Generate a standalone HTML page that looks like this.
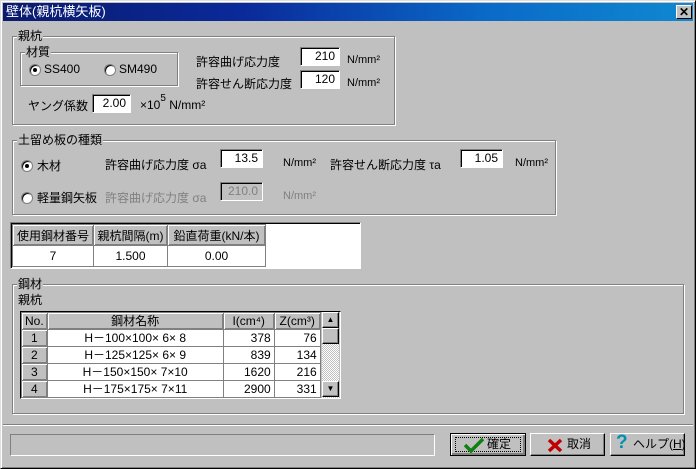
<!DOCTYPE html>
<html><head><meta charset="utf-8"><style>
*{box-sizing:border-box;margin:0;padding:0}
body{width:696px;height:469px;background:#c0c0c0;font-family:"Liberation Sans","Noto Sans CJK JP",sans-serif;font-size:12px;color:#000;position:relative;overflow:hidden}
.a{position:absolute;white-space:nowrap}
.win{left:0;top:0;width:696px;height:469px;border:1px solid;border-color:#dfdfdf #000 #000 #dfdfdf;box-shadow:inset 1px 1px #fff,inset -1px -1px #808080}
.title{left:3px;top:3px;width:690px;height:18px;background:linear-gradient(90deg,#0a1a6e,#0a2a9a 35%,#0a6ac8 70%,#1088d0);color:#fff;font-size:13px;line-height:18px;padding-left:3px}
.close{left:676px;top:5px;width:16px;height:14px;background:#c0c0c0;border:1px solid;border-color:#fff #000 #000 #fff;font-size:12px;font-weight:bold;text-align:center;line-height:12px}
.grp{border:1px solid #808080;box-shadow:1px 1px #fff,inset 1px 1px #fff}
.lbl{background:#c0c0c0;padding:0 1px}
.inp{background:#fff;border:1px solid;border-color:#808080 #fff #fff #808080;box-shadow:inset 1px 1px #000;text-align:right;padding-right:4px;line-height:16px;height:19px}
.dis{color:#808080}
.radio{width:12px;height:12px;border-radius:50%;background:#fff;border:1px solid #808080;box-shadow:inset 1px 1px #000}
.radio.on::after{content:"";position:absolute;left:3px;top:3px;width:4px;height:4px;border-radius:50%;background:#000}
table{border-collapse:collapse}
.t1 td{border:1px solid #808080;height:21px;text-align:center;font-size:12px}
.hd{background:#c0c0c0;box-shadow:inset 1px 1px #fff,inset -1px -1px #808080}
.t2 td{border:1px solid #808080;height:17px;line-height:14px;font-size:12px;padding:0 3px}
.btn{border:1px solid;border-color:#fff #000 #000 #fff;box-shadow:inset -1px -1px #808080;text-align:center;line-height:21px;height:23px}
</style></head><body>
<div class="a win"></div>
<div class="a title">壁体(親杭横矢板)</div>
<div class="a close">✕</div>

<div class="a grp" style="left:12px;top:36px;width:383px;height:89px"></div>
<div class="a lbl" style="left:17px;top:27px">親杭</div>
<div class="a grp" style="left:20px;top:52px;width:158px;height:34px"></div>
<div class="a lbl" style="left:25px;top:43px">材質</div>
<div class="a radio on" style="left:29px;top:64px"></div>
<div class="a" style="left:44px;top:62px">SS400</div>
<div class="a radio" style="left:104px;top:64px"></div>
<div class="a" style="left:119px;top:62px">SM490</div>
<div class="a" style="left:196px;top:53px">許容曲げ応力度</div>
<div class="a inp" style="left:300px;top:47px;width:40px">210</div>
<div class="a" style="left:347px;top:54px;font-size:11px">N/mm²</div>
<div class="a" style="left:196px;top:75px">許容せん断応力度</div>
<div class="a inp" style="left:300px;top:70px;width:40px">120</div>
<div class="a" style="left:347px;top:77px;font-size:11px">N/mm²</div>
<div class="a" style="left:28px;top:97px">ヤング係数</div>
<div class="a inp" style="left:92px;top:94px;width:39px">2.00</div>
<div class="a" style="left:140px;top:96px">×10<sup style="font-size:10px;position:relative;top:-3px">5</sup> N/mm²</div>

<div class="a grp" style="left:12px;top:140px;width:544px;height:75px"></div>
<div class="a lbl" style="left:17px;top:131px">土留め板の種類</div>
<div class="a radio on" style="left:21px;top:160px"></div>
<div class="a" style="left:37px;top:157px">木材</div>
<div class="a" style="left:105px;top:156px">許容曲げ応力度 σa</div>
<div class="a inp" style="left:220px;top:149px;width:43px">13.5</div>
<div class="a" style="left:283px;top:157px;font-size:11px">N/mm²</div>
<div class="a" style="left:330px;top:156px">許容せん断応力度 τa</div>
<div class="a inp" style="left:460px;top:149px;width:43px">1.05</div>
<div class="a" style="left:515px;top:157px;font-size:11px">N/mm²</div>
<div class="a radio" style="left:21px;top:192px"></div>
<div class="a" style="left:37px;top:189px">軽量鋼矢板</div>
<div class="a dis" style="left:105px;top:189px">許容曲げ応力度 σa</div>
<div class="a inp dis" style="left:220px;top:182px;width:43px;background:#c0c0c0">210.0</div>
<div class="a dis" style="left:283px;top:190px;font-size:11px">N/mm²</div>

<div class="a" style="left:10px;top:222px;width:351px;height:47px;background:#fff;border:1px solid;border-color:#808080 #fff #fff #808080;box-shadow:inset 1px 1px #000"></div>
<table class="a t1" style="left:12px;top:224px">
<tr><td class="hd" style="width:81px">使用鋼材番号</td><td class="hd" style="width:74px">親杭間隔(m)</td><td class="hd" style="width:98px">鉛直荷重(kN/本)</td></tr>
<tr style="background:#fff"><td>7</td><td>1.500</td><td>0.00</td></tr>
</table>

<div class="a grp" style="left:12px;top:284px;width:672px;height:130px"></div>
<div class="a lbl" style="left:17px;top:275px">鋼材</div>
<div class="a" style="left:18px;top:291px">親杭</div>
<div class="a" style="left:20px;top:311px;width:321px;height:88px;background:#c0c0c0;border:1px solid #000;border-right-color:#fff;border-bottom-color:#fff"></div>
<table class="a t2" style="left:21px;top:312px">
<tr><td class="hd" style="width:25px">No.</td><td class="hd" style="width:176px;text-align:center">鋼材名称</td><td class="hd" style="width:51px;text-align:center">I(cm⁴)</td><td class="hd" style="width:46px;text-align:center">Z(cm³)</td></tr>
<tr style="background:#fff"><td class="hd" style="text-align:center">1</td><td style="text-align:center">H－100×100× 6× 8</td><td style="text-align:right">378</td><td style="text-align:right">76</td></tr>
<tr style="background:#fff"><td class="hd" style="text-align:center">2</td><td style="text-align:center">H－125×125× 6× 9</td><td style="text-align:right">839</td><td style="text-align:right">134</td></tr>
<tr style="background:#fff"><td class="hd" style="text-align:center">3</td><td style="text-align:center">H－150×150× 7×10</td><td style="text-align:right">1620</td><td style="text-align:right">216</td></tr>
<tr style="background:#fff"><td class="hd" style="text-align:center">4</td><td style="text-align:center">H－175×175× 7×11</td><td style="text-align:right">2900</td><td style="text-align:right">331</td></tr>
</table>
<div class="a" style="left:322px;top:312px;width:17px;height:86px;background:repeating-conic-gradient(#fff 0 25%,#c0c0c0 0 50%) 0 0/2px 2px"></div>
<div class="a btn" style="left:322px;top:312px;width:17px;height:16px;line-height:14px;font-size:8px;background:#c0c0c0">▲</div>
<div class="a btn" style="left:322px;top:328px;width:17px;height:16px;background:#c0c0c0"></div>
<div class="a btn" style="left:322px;top:381px;width:17px;height:16px;line-height:14px;font-size:8px;background:#c0c0c0">▼</div>

<div class="a" style="left:3px;top:424px;width:690px;height:2px;border-top:1px solid #808080;border-bottom:1px solid #fff"></div>
<div class="a" style="left:10px;top:434px;width:425px;height:22px;border:1px solid;border-color:#808080 #fff #fff #808080"></div>
<div class="a btn" style="left:450px;top:433px;width:76px;border:1px solid #000;box-shadow:inset 1px 1px #fff,inset -2px -2px #808080">
<div class="a" style="left:4px;top:3px;width:66px;height:15px;border:1px dotted #000"></div>
<svg class="a" style="left:12px;top:3px" width="22" height="16"><path d="M2 8 L8 14 L20 2" stroke="#108010" stroke-width="3.5" fill="none"/></svg>
<span class="a" style="left:36px;top:0">確定</span></div>
<div class="a btn" style="left:530px;top:433px;width:75px">
<svg class="a" style="left:16px;top:4px" width="16" height="15"><path d="M2 2 L14 13 M14 2 L2 13" stroke="#c00000" stroke-width="3.5"/></svg>
<span class="a" style="left:36px;top:0">取消</span></div>
<div class="a btn" style="left:610px;top:433px;width:75px">
<span class="a" style="left:5px;top:-2px;font-size:19px;font-weight:bold;color:#0090b0">?</span>
<span class="a" style="left:22px;top:0">ヘルプ(<u>H</u>)</span></div>
</body></html>
